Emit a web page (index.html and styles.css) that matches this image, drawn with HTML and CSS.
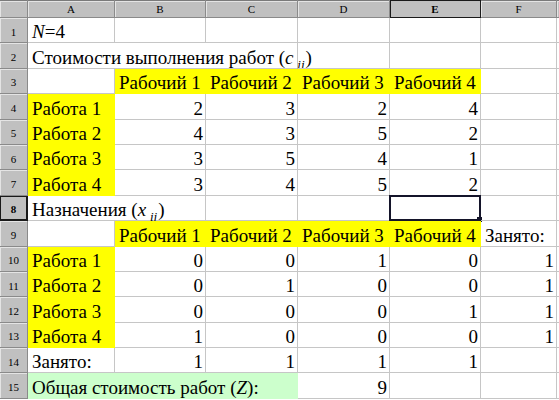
FILE: index.html
```html
<!DOCTYPE html>
<html>
<head>
<meta charset="utf-8">
<link rel="stylesheet" href="styles.css">
</head>
<body>
<div class="sheet">
  <div class="h corner"></div>
  <div class="h">A</div>
  <div class="h">B</div>
  <div class="h">C</div>
  <div class="h">D</div>
  <div class="h act">E</div>
  <div class="h">F</div>
  <div class="h"></div>

  <div class="h rh">1</div>
  <div class="c"><i>N</i>=4</div>
  <div class="c"></div><div class="c"></div><div class="c"></div><div class="c"></div><div class="c"></div><div class="c"></div>

  <div class="h rh">2</div>
  <div class="c s3">Стоимости выполнения работ (<i>c</i>&thinsp;<span class="sb">ij</span>)</div>
  <div class="c"></div><div class="c"></div><div class="c"></div><div class="c"></div>

  <div class="h rh">3</div>
  <div class="c"></div>
  <div class="c y">Рабочий 1</div><div class="c y">Рабочий 2</div><div class="c y">Рабочий 3</div><div class="c y">Рабочий 4</div>
  <div class="c"></div><div class="c"></div>

  <div class="h rh">4</div>
  <div class="c y">Работа 1</div>
  <div class="c n">2</div><div class="c n">3</div><div class="c n">2</div><div class="c n">4</div>
  <div class="c"></div><div class="c"></div>

  <div class="h rh">5</div>
  <div class="c y">Работа 2</div>
  <div class="c n">4</div><div class="c n">3</div><div class="c n">5</div><div class="c n">2</div>
  <div class="c"></div><div class="c"></div>

  <div class="h rh">6</div>
  <div class="c y">Работа 3</div>
  <div class="c n">3</div><div class="c n">5</div><div class="c n">4</div><div class="c n">1</div>
  <div class="c"></div><div class="c"></div>

  <div class="h rh">7</div>
  <div class="c y">Работа 4</div>
  <div class="c n">3</div><div class="c n">4</div><div class="c n">5</div><div class="c n">2</div>
  <div class="c"></div><div class="c"></div>

  <div class="h rh act">8</div>
  <div class="c s2">Назначения (<i>x</i>&thinsp;<span class="sb">ij</span>)</div>
  <div class="c"></div><div class="c"></div>
  <div class="c sel"><span class="handle"></span></div>
  <div class="c"></div><div class="c"></div>

  <div class="h rh">9</div>
  <div class="c"></div>
  <div class="c y">Рабочий 1</div><div class="c y">Рабочий 2</div><div class="c y">Рабочий 3</div><div class="c y">Рабочий 4</div>
  <div class="c">Занято:</div><div class="c"></div>

  <div class="h rh">10</div>
  <div class="c y">Работа 1</div>
  <div class="c n">0</div><div class="c n">0</div><div class="c n">1</div><div class="c n">0</div>
  <div class="c n">1</div><div class="c"></div>

  <div class="h rh">11</div>
  <div class="c y">Работа 2</div>
  <div class="c n">0</div><div class="c n">1</div><div class="c n">0</div><div class="c n">0</div>
  <div class="c n">1</div><div class="c"></div>

  <div class="h rh">12</div>
  <div class="c y">Работа 3</div>
  <div class="c n">0</div><div class="c n">0</div><div class="c n">0</div><div class="c n">1</div>
  <div class="c n">1</div><div class="c"></div>

  <div class="h rh">13</div>
  <div class="c y">Работа 4</div>
  <div class="c n">1</div><div class="c n">0</div><div class="c n">0</div><div class="c n">0</div>
  <div class="c n">1</div><div class="c"></div>

  <div class="h rh">14</div>
  <div class="c">Занято:</div>
  <div class="c n">1</div><div class="c n">1</div><div class="c n">1</div><div class="c n">1</div>
  <div class="c"></div><div class="c"></div>

  <div class="h rh">15</div>
  <div class="c s3 g">Общая стоимость работ (<i>Z</i>):</div>
  <div class="c n">9</div>
  <div class="c"></div><div class="c"></div><div class="c"></div>
</div>
</body>
</html>
```

FILE: styles.css
```css
html, body {
  margin: 0;
  padding: 0;
  background: #ffffff;
  overflow: hidden;
}

.sheet {
  display: grid;
  grid-template-columns: 28px 87px 91px 92px 92px 91px 76px 20px;
  grid-template-rows: 18px repeat(15, 25.4px);
  width: 577px;
  font-family: "Liberation Serif", "Times New Roman", serif;
  font-size: 19px;
  color: #000;
}

.h {
  box-sizing: border-box;
  background: #c0c0c0;
  border-right: 1px solid #8a8a8a;
  border-bottom: 1px solid #8a8a8a;
  font-size: 11px;
  display: flex;
  align-items: center;
  justify-content: center;
  box-shadow: inset 1px 1px 0 #e4e4e4;
}

.sheet > .h:nth-child(-n+8) {
  box-shadow: inset 0 1px 0 #7a7a7a, inset 1px 2px 0 #e4e4e4;
}

.h.rh {
  padding-top: 3px;
}

.h.act {
  font-weight: bold;
  box-shadow: inset 0 0 0 1px #1a1a1a;
  border-color: #1a1a1a;
}

.sheet > .h.act:nth-child(-n+8) {
  box-shadow: inset 1px 1px 0 #1a1a1a;
}

.c {
  box-sizing: border-box;
  border-right: 1px solid #c6c6c6;
  border-bottom: 1px solid #c6c6c6;
  display: flex;
  align-items: flex-end;
  padding: 0 3px 0 4px;
  line-height: 21px;
  white-space: nowrap;
  position: relative;
}

.c.n {
  justify-content: flex-end;
  padding-right: 2px;
}

.s3 { grid-column: span 3; }
.s2 { grid-column: span 2; }

.y {
  background: #ffff00;
  border-color: #ffff00;
}

.g {
  background: #ccffcc;
  border-color: #ccffcc;
}

.sb {
  font-size: 13px;
  font-style: italic;
  position: relative;
  top: 3px;
  line-height: 13px;
  margin-right: 1px;
}

.sel {
  border: none;
  box-shadow: inset 0 0 0 2px #14142a;
  margin: -1px 0 0 -1px;
}

.handle {
  position: absolute;
  right: -2px;
  bottom: -2px;
  width: 5px;
  height: 5px;
  background: #14142a;
  border: 1px solid #fff;
  border-top: none;
  border-left: none;
}
```
